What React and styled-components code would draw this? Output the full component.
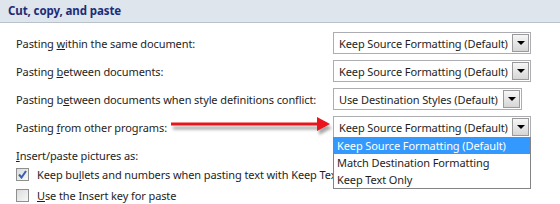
import React from 'react'
import styled, { createGlobalStyle } from 'styled-components'

const GlobalStyle = createGlobalStyle`
  body {
    margin: 0;
    background: #ffffff;
    font-family: "Noto Sans", "Open Sans", sans-serif;
    font-size: 11px;
    letter-spacing: -0.1px;
    color: #1e1e1e;
  }
`

const Page = styled.div`
  position: relative;
  width: 560px;
  height: 204px;
  overflow: hidden;
  background: #fff;
`

const SectionHeader = styled.div`
  height: 22px;
  line-height: 22px;
  padding-left: 8px;
  background: #dfe5ed;
  border-bottom: 1px solid #b9c1cb;
  color: #1b2d78;
  font-weight: bold;
  font-size: 11.5px;
`

const Options = styled.div`
  padding: 9px 0 0 16px;
  display: flex;
  flex-direction: column;
`

const SelectRow = styled.div`
  display: flex;
  align-items: center;
  height: 22px;
  margin-bottom: 6px;
`

const Label = styled.div`
  width: 317px;
  white-space: nowrap;
`

const Key = styled.span`
  text-decoration: underline;
`

const Select = styled.div`
  display: flex;
  align-items: center;
  box-sizing: border-box;
  width: ${p => p.$width}px;
  height: 22px;
  border: 1px solid #abadb3;
  background: #fff;
  padding-left: 5px;
  white-space: nowrap;
`

const SelectText = styled.span`
  flex: 1;
  overflow: hidden;
`

const DropButton = styled.div`
  display: flex;
  align-items: center;
  justify-content: center;
  flex: none;
  box-sizing: border-box;
  width: 17px;
  height: 18px;
  margin-right: 1px;
  border: 1px solid #9a9a9a;
  background: linear-gradient(#f6f6f6, #d6d6d6);
`

const Triangle = styled.div`
  width: 0;
  height: 0;
  border-left: 4px solid transparent;
  border-right: 4px solid transparent;
  border-top: 4px solid #000;
`

const PlainRow = styled.div`
  display: flex;
  align-items: center;
  height: ${p => p.$h}px;
  margin-top: ${p => p.$mt || 0}px;
  white-space: nowrap;
`

const ClippedText = styled.span`
  max-width: 296px;
  overflow: hidden;
`

const Check = styled.div`
  box-sizing: border-box;
  flex: none;
  width: 13px;
  height: 13px;
  margin-right: 8px;
  border: 1px solid #8e8f8f;
  background: linear-gradient(135deg, #dcdcdc, #f8f8f8);
  display: flex;
  align-items: center;
  justify-content: center;
`

const ListBox = styled.div`
  position: absolute;
  left: 333px;
  top: 137px;
  width: 198px;
  box-sizing: border-box;
  border: 1px solid #838383;
  border-top: none;
  background: #fff;
`

const ListItem = styled.div`
  height: 17px;
  line-height: 17px;
  padding-left: 3px;
  white-space: nowrap;
  background: ${p => (p.$active ? '#3399ff' : '#fff')};
  color: ${p => (p.$active ? '#fff' : '#1e1e1e')};
`

const Arrow = styled.svg`
  position: absolute;
  left: 165px;
  top: 112px;
`

const Dropdown = ({ width, children }) => (
  <Select $width={width}>
    <SelectText>{children}</SelectText>
    <DropButton>
      <Triangle />
    </DropButton>
  </Select>
)

export default function App() {
  return (
    <Page>
      <GlobalStyle />
      <SectionHeader>Cut, copy, and paste</SectionHeader>
      <Options>
        <SelectRow>
          <Label>Pasting <Key>w</Key>ithin the same document:</Label>
          <Dropdown width={198}>Keep Source Formatting (Default)</Dropdown>
        </SelectRow>
        <SelectRow>
          <Label>Pasting <Key>b</Key>etween documents:</Label>
          <Dropdown width={198}>Keep Source Formatting (Default)</Dropdown>
        </SelectRow>
        <SelectRow>
          <Label>Pasting b<Key>e</Key>tween documents when style definitions conflict:</Label>
          <Dropdown width={189}>Use Destination Styles (Default)</Dropdown>
        </SelectRow>
        <SelectRow>
          <Label>Pasting <Key>f</Key>rom other programs:</Label>
          <Dropdown width={198}>Keep Source Formatting (Default)</Dropdown>
        </SelectRow>
        <PlainRow $h={18} $mt={2}>
          <span><Key>I</Key>nsert/paste pictures as:</span>
        </PlainRow>
        <PlainRow $h={21}>
          <Check>
            <svg width="9" height="9" viewBox="0 0 9 9">
              <path d="M1 4.5 L3.5 7.5 L8 1" fill="none" stroke="#3a5fb0" strokeWidth="2" />
            </svg>
          </Check>
          <ClippedText>Keep bu<Key>l</Key>lets and numbers when pasting text with Keep Text Only option</ClippedText>
        </PlainRow>
        <PlainRow $h={21}>
          <Check />
          <span><Key>U</Key>se the Insert key for paste</span>
        </PlainRow>
      </Options>

      <Arrow width="170" height="26" viewBox="165 112 170 26">
        <defs>
          <filter id="sh" x="-10%" y="-50%" width="120%" height="200%">
            <feDropShadow dx="2" dy="4" stdDeviation="1.5" floodColor="#000" floodOpacity="0.35" />
          </filter>
        </defs>
        <g filter="url(#sh)">
          <rect x="171" y="122.5" width="149" height="3" fill="#e8131b" />
          <polygon points="317,117 330,124 317,131" fill="#e8131b" />
        </g>
      </Arrow>

      <ListBox>
        <ListItem $active>Keep Source Formatting (Default)</ListItem>
        <ListItem>Match Destination Formatting</ListItem>
        <ListItem>Keep Text Only</ListItem>
      </ListBox>
    </Page>
  )
}
